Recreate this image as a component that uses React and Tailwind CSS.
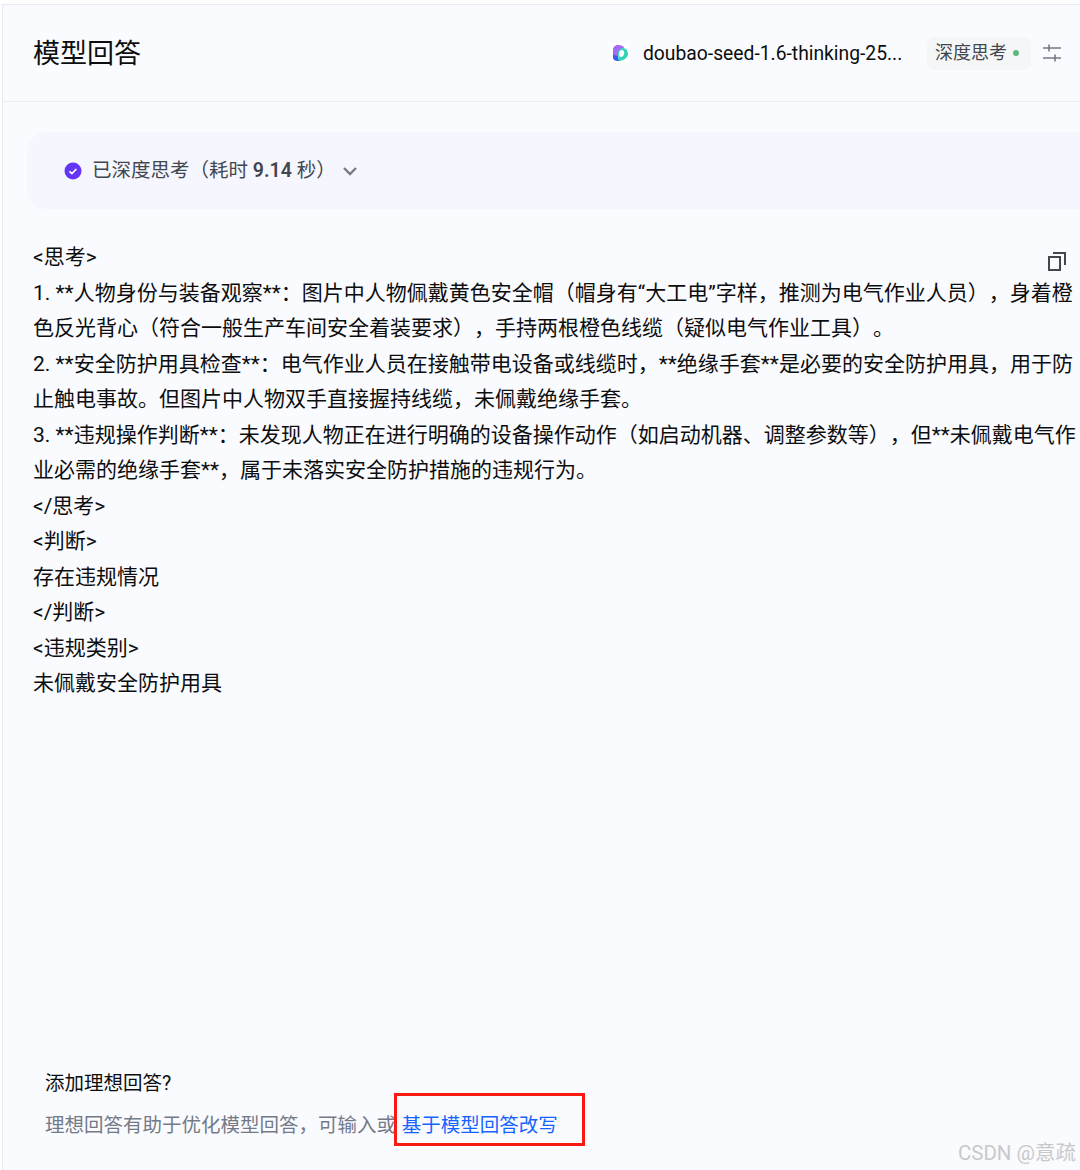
const FONT = "font-['Roboto','Noto_Sans_CJK_SC',sans-serif] [text-spacing-trim:space-all]";

const LINES = [
  "<思考>",
  "1. **人物身份与装备观察**：图片中人物佩戴黄色安全帽（帽身有“大工电”字样，推测为电气作业人员），身着橙",
  "色反光背心（符合一般生产车间安全着装要求），手持两根橙色线缆（疑似电气作业工具）。",
  "2. **安全防护用具检查**：电气作业人员在接触带电设备或线缆时，**绝缘手套**是必要的安全防护用具，用于防",
  "止触电事故。但图片中人物双手直接握持线缆，未佩戴绝缘手套。",
  "3. **违规操作判断**：未发现人物正在进行明确的设备操作动作（如启动机器、调整参数等），但**未佩戴电气作",
  "业必需的绝缘手套**，属于未落实安全防护措施的违规行为。",
  "</思考>",
  "<判断>",
  "存在违规情况",
  "</判断>",
  "<违规类别>",
  "未佩戴安全防护用具",
];

function Logo() {
  return (
    <svg width="20" height="20" viewBox="0 0 20 20" className="shrink-0">
      <rect width="20" height="20" rx="3" fill="#ffffff" />
      <path d="M3 6.500C3 3.500 6 1.500 9 2c4 .6 5 2 5 3-3 0-6 3-6 7 0 3 .5 5 1 6-3 0-6-1-6-4z" fill="#a66bf5" />
      <path d="M3 13c1 3 3 5 6 5 5 0 9-4 9-7 0-4-3-6-5-6-3 0-5 3-5 6 0 2 0 3 1 4-2 0-5-1-6-2z" fill="#2fd6b8" />
      <path d="M3 11v3c0 3 3 4 6 4-1-1-1-3-1-5-2 0-4-1-5-2z" fill="#3b5bf5" />
      <ellipse cx="11.500" cy="10.500" rx="2.600" ry="3.600" fill="#ffffff" transform="rotate(12 11.500 10.500)" />
    </svg>
  );
}

export default function App() {
  return (
    <div className={`${FONT} w-[1080px] h-[1170px] bg-white overflow-hidden pt-1`}>
      <div className="h-[1166px] ml-0.5 bg-[#fafbfe] border-t border-l border-[#e8eaef] flex flex-col">
        {/* Header */}
        <div className="h-[97px] shrink-0 border-b border-[#ebedf0] flex items-center pl-[30px] pr-[18px]">
          <h1 className="text-[27px] font-normal text-[#0c0d0e] leading-none pt-0.5">模型回答</h1>
          <div className="ml-auto flex items-center">
            <Logo />
            <span className="ml-[13px] w-[262px] text-[19.300px] text-[#0c0d0e] whitespace-nowrap pt-0.5">doubao-seed-1.6-thinking-25...</span>
            <span className="ml-[22px] h-[33px] w-[104px] rounded-lg bg-[#f5f6f7] flex items-center pl-[8px] pb-0.5 text-[18px] text-[#42464e]">
              深度思考
              <span className="ml-[6px] mt-0.5 w-[6px] h-[6px] rounded-full bg-[#5cb87e]" />
            </span>
            <svg width="20" height="20" viewBox="0 0 20 20" className="ml-[11px]" fill="none" stroke="#737a87" strokeWidth="1.600">
              <path d="M1 5h18M1 15h18M7 1.500v7M13 11.500v7" />
            </svg>
          </div>
        </div>

        {/* Thinking state */}
        <div className="mt-[30px] ml-[24px] h-[77px] shrink-0 rounded-l-[20px] bg-[#f5f6fe] flex items-center pl-[37px]">
          <svg width="18" height="18" viewBox="0 0 18 18" className="shrink-0">
            <circle cx="9" cy="9" r="8.500" fill="#6435f5" />
            <path d="M5.500 9.300l2.400 2.200 4.500-4.500" fill="none" stroke="#ffffff" strokeWidth="1.700" />
          </svg>
          <span className="ml-[10px] text-[19.500px] text-[#42464e] whitespace-nowrap">
            已深度思考（耗时 <b className="font-semibold">9.14</b> 秒）
          </span>
          <svg width="16" height="16" viewBox="0 0 16 16" className="ml-[6px]" fill="none" stroke="#737a87" strokeWidth="2.400">
            <path d="M2 5l6 6 6-6" />
          </svg>
        </div>

        {/* Answer */}
        <div className="relative mt-[31px] pl-[30px] flex-1 min-h-0">
          <svg width="20" height="20" viewBox="0 0 20 20" className="absolute right-[13px] top-[11px]" fill="none" stroke="#42464e" strokeWidth="2">
            <path d="M2 6h11v13H2z" />
            <path d="M6 2h12v12" />
          </svg>
          {LINES.map((line, i) => (
            <div key={i} className="text-[21px] leading-[35.500px] text-[#0c0d0e] whitespace-nowrap">{line}</div>
          ))}
        </div>

        {/* Ideal answer prompt */}
        <div className="relative pl-[42px] pb-[31px] shrink-0">
          <div className="text-[19.500px] leading-[26px] text-[#0c0d0e]">添加理想回答?</div>
          <div className="mt-[16px] text-[19.500px] leading-[26px] text-[#737a87] whitespace-nowrap">
            理想回答有助于优化模型回答，可输入或 <span className="ml-px text-[#1664ff]">基于模型回答改写</span>
          </div>
          <div className="absolute left-[391px] top-[22px] w-[191px] h-[53px] border-[3px] border-[#fb1a12]" />
          <div className="absolute right-[4px] bottom-[4px] text-[20.500px] leading-[26px] text-[#c8c9cb] whitespace-nowrap">CSDN @意疏</div>
        </div>
      </div>
    </div>
  );
}
